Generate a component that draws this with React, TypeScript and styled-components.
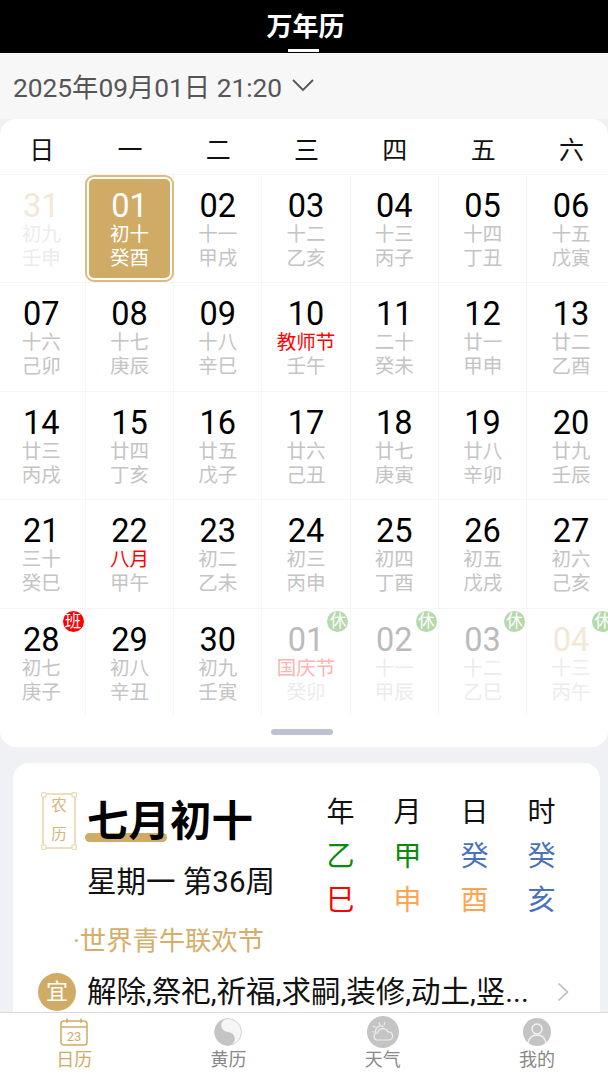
import React from "react";
import styled, { createGlobalStyle } from "styled-components";

const FONT = `Roboto, "Noto Sans CJK SC", sans-serif`;
const GOLD = "#d0ab66";

const GlobalStyle = createGlobalStyle`
  html, body {
    margin: 0;
    padding: 0;
    background: #eff1f5;
    font-family: ${FONT};
  }
`;

const Page = styled.div`
  width: 608px;
  height: 1074px;
  overflow: hidden;
  display: flex;
  flex-direction: column;
  background: #eff1f5;
`;
const Header = styled.div`
  height: 53px;
  flex: none;
  background: #000;
  display: flex;
  justify-content: center;
`;
const HeaderTitle = styled.div`
  height: 53px;
  box-sizing: border-box;
  padding: 7px 0 0 3px;
  color: #fff;
  font-size: 26px;
  line-height: 40px;
  font-weight: 700;
  position: relative;
  &::after {
    content: "";
    position: absolute;
    left: 25px;
    bottom: 1px;
    width: 31px;
    height: 3px;
    background: #fff;
  }
`;
const DateBar = styled.div`
  height: 66px;
  flex: none;
  background: #f7f7f7;
  display: flex;
  align-items: center;
  gap: 10px;
  padding: 0 0 2px 13px;
  box-sizing: border-box;
  color: #555;
  font-size: 26.3px;
`;
const Main = styled.div`
  flex: 1;
  min-height: 0;
  overflow: hidden;
`;
const CalendarCard = styled.div`
  height: 628px;
  background: #fff;
  border-radius: 16px;
  overflow: hidden;
  box-sizing: border-box;
`;
const Grid = styled.div`
  display: grid;
  grid-template-columns: repeat(7, 88.3px);
  margin-left: -2.5px;
  width: 618.1px;
`;
const WeekHead = styled.div`
  height: 55px;
  display: flex;
  align-items: center;
  justify-content: center;
  padding-top: 3px;
  box-sizing: border-box;
  font-size: 25px;
  color: #111;
`;
const Cell = styled.div`
  position: relative;
  height: 108.4px;
  box-sizing: border-box;
  border-top: 1px solid #f6f6f6;
  border-right: 1px solid #f6f6f6;
  display: flex;
  flex-direction: column;
  align-items: center;
  padding-top: 14px;
`;
const Selected = styled.div<{ $on: boolean }>`
  position: absolute;
  left: 1px;
  top: 2px;
  right: 1px;
  bottom: 2px;
  display: ${({ $on }) => ($on ? "block" : "none")};
  background: ${GOLD};
  border: 2px solid #fff;
  outline: 2px solid #dcbb7e;
  border-radius: 7px;
  box-sizing: border-box;
`;
const Num = styled.div<{ $color: string }>`
  position: relative;
  font-size: 32.5px;
  line-height: 34px;
  color: ${({ $color }) => $color};
`;
const Sub = styled.div<{ $color: string }>`
  position: relative;
  font-size: 19.5px;
  line-height: 24px;
  white-space: nowrap;
  color: ${({ $color }) => $color};
`;
const Badge = styled.div<{ $bg: string }>`
  position: absolute;
  top: 2px;
  left: 65px;
  width: 21px;
  height: 21px;
  border-radius: 50%;
  background: ${({ $bg }) => $bg};
  color: #fff;
  font-size: 16.5px;
  line-height: 21px;
  text-align: center;
`;
const Handle = styled.div`
  width: 62px;
  height: 6px;
  margin: 13px 0 0 271px;
  border-radius: 3px;
  background: #bcc3ce;
`;
const InfoCard = styled.div`
  margin: 16px 8px 0 13px;
  height: 300px;
  background: #fff;
  border-radius: 16px;
  padding: 29px 0 0 25px;
  box-sizing: border-box;
`;
const TopRow = styled.div`
  display: flex;
  align-items: flex-start;
`;
const LeftCol = styled.div`
  width: 273px;
  flex: none;
`;
const TitleRow = styled.div`
  display: flex;
  gap: 10px;
  margin-left: 3px;
`;
const Seal = styled.div`
  position: relative;
  width: 36px;
  height: 58px;
  flex: none;
  box-sizing: border-box;
  display: flex;
  flex-direction: column;
  align-items: center;
  justify-content: center;
  color: #d8b67a;
  font-size: 15.5px;
  line-height: 29px;
  svg {
    position: absolute;
    inset: 0;
  }
`;
const LunarTitle = styled.div`
  position: relative;
  font-size: 41.5px;
  line-height: 56px;
  font-weight: 700;
  color: #000;
  padding-top: 2px;
  &::before {
    content: "";
    position: absolute;
    left: -2px;
    top: 41px;
    width: 82px;
    height: 9px;
    border-radius: 5px;
    background: ${GOLD};
  }
`;
const TitleText = styled.span`
  position: relative;
`;
const WeekLine = styled.div`
  margin: 12px 0 0 49px;
  font-size: 29.5px;
  line-height: 40px;
  color: #111;
`;
const Festival = styled.div`
  margin: 19px 0 0 35px;
  font-size: 26.3px;
  line-height: 40px;
  color: #d4ae6a;
  white-space: nowrap;
`;
const Pillars = styled.div`
  display: grid;
  grid-template-columns: repeat(4, 67px);
  grid-auto-rows: 44px;
  margin: -4px 0 0 -4px;
`;
const Pillar = styled.div<{ $color: string }>`
  display: flex;
  align-items: center;
  justify-content: center;
  font-size: 28px;
  color: ${({ $color }) => $color};
`;
const YiRow = styled.div`
  display: flex;
  align-items: center;
  margin-top: 11px;
`;
const YiMark = styled.div`
  width: 38px;
  height: 38px;
  border-radius: 50%;
  background: ${GOLD};
  color: #fff;
  font-size: 22px;
  line-height: 38px;
  text-align: center;
  flex: none;
`;
const YiText = styled.div`
  margin-left: 11px;
  width: 440px;
  font-size: 29.5px;
  line-height: 40px;
  color: #111;
  white-space: nowrap;
`;
const Chevron = styled.div`
  margin-left: 30px;
  display: flex;
  color: #bbb;
`;
const TabBar = styled.div`
  flex: none;
  height: 62px;
  background: #fff;
  border-top: 1px solid #d9d9d9;
  box-sizing: border-box;
  display: grid;
  grid-template-columns: repeat(4, 154.3px);
  margin-left: -3px;
  width: 617.2px;
`;
const Tab = styled.div<{ $active?: boolean }>`
  display: flex;
  flex-direction: column;
  align-items: center;
  padding-top: 3px;
  color: ${({ $active }) => ($active ? GOLD : "#888")};
  font-size: 18px;
  line-height: 24px;
`;
const TabIcon = styled.div`
  height: 32px;
  display: flex;
  align-items: center;
  justify-content: center;
`;

type Day = {
  n: string;
  l: string;
  g: string;
  kind?: "dimGold" | "dimGrey" | "sel";
  lc?: string;
  badge?: string;
};

const days: Day[] = [
  { n: "31", l: "初九", g: "壬申", kind: "dimGold" },
  { n: "01", l: "初十", g: "癸酉", kind: "sel" },
  { n: "02", l: "十一", g: "甲戌" },
  { n: "03", l: "十二", g: "乙亥" },
  { n: "04", l: "十三", g: "丙子" },
  { n: "05", l: "十四", g: "丁丑" },
  { n: "06", l: "十五", g: "戊寅" },
  { n: "07", l: "十六", g: "己卯" },
  { n: "08", l: "十七", g: "庚辰" },
  { n: "09", l: "十八", g: "辛巳" },
  { n: "10", l: "教师节", g: "壬午", lc: "#f00" },
  { n: "11", l: "二十", g: "癸未" },
  { n: "12", l: "廿一", g: "甲申" },
  { n: "13", l: "廿二", g: "乙酉" },
  { n: "14", l: "廿三", g: "丙戌" },
  { n: "15", l: "廿四", g: "丁亥" },
  { n: "16", l: "廿五", g: "戊子" },
  { n: "17", l: "廿六", g: "己丑" },
  { n: "18", l: "廿七", g: "庚寅" },
  { n: "19", l: "廿八", g: "辛卯" },
  { n: "20", l: "廿九", g: "壬辰" },
  { n: "21", l: "三十", g: "癸巳" },
  { n: "22", l: "八月", g: "甲午", lc: "#f00" },
  { n: "23", l: "初二", g: "乙未" },
  { n: "24", l: "初三", g: "丙申" },
  { n: "25", l: "初四", g: "丁酉" },
  { n: "26", l: "初五", g: "戊戌" },
  { n: "27", l: "初六", g: "己亥" },
  { n: "28", l: "初七", g: "庚子", badge: "班" },
  { n: "29", l: "初八", g: "辛丑" },
  { n: "30", l: "初九", g: "壬寅" },
  { n: "01", l: "国庆节", g: "癸卯", kind: "dimGrey", lc: "#ffb3b3", badge: "休" },
  { n: "02", l: "十一", g: "甲辰", kind: "dimGrey", badge: "休" },
  { n: "03", l: "十二", g: "乙巳", kind: "dimGrey", badge: "休" },
  { n: "04", l: "十三", g: "丙午", kind: "dimGold", badge: "休" },
];

const pillars = [
  ["年", "#111"], ["月", "#111"], ["日", "#111"], ["时", "#111"],
  ["乙", "#0a8a0a"], ["甲", "#0a8a0a"], ["癸", "#4a72b8"], ["癸", "#4a72b8"],
  ["巳", "#f00"], ["申", "#ffa552"], ["酉", "#ffa552"], ["亥", "#4a72b8"],
];

function numColor(d: Day) {
  if (d.kind === "sel") return "#fff";
  if (d.kind === "dimGold") return "#f2e8d6";
  if (d.kind === "dimGrey") return "#bbb";
  return "#000";
}

function subColor(d: Day) {
  if (d.kind === "sel") return "#fff";
  if (d.kind) return "#ececec";
  return "#c4c4c4";
}

function SealFrame() {
  const c = "#e8d3aa";
  return (
    <svg width="36" height="58" viewBox="0 0 36 58" fill="none" stroke={c} strokeWidth="1.5">
      <path d="M5 2H31M5 56H31M2 5V53M34 5V53" />
      <path d="M0.700 0.700H5V5H0.700zM31 0.700H35.300V5H31zM0.700 53H5V57.300H0.700zM31 53H35.300V57.300H31z" strokeWidth="1" />
    </svg>
  );
}

function CalendarIcon() {
  return (
    <svg width="28" height="28" viewBox="0 0 28 28" fill="none" stroke={GOLD} strokeWidth="1.5">
      <rect x="1" y="3" width="26" height="24" rx="3" />
      <path d="M1 9H27M7 0.5V5M21 0.5V5" />
      <text x="14" y="23" textAnchor="middle" fontSize="13" fill={GOLD} stroke="none" fontFamily="Roboto, sans-serif">23</text>
    </svg>
  );
}

function YinYangIcon() {
  return (
    <svg width="28" height="28" viewBox="0 0 28 28">
      <circle cx="14" cy="14" r="13.4" fill="#f6f6f6" stroke="#d4d4d4" strokeWidth="1" />
      <path d="M14 .5a13.500 13.500 0 0 0 0 27 6.750 6.750 0 0 0 0-13.500 6.750 6.750 0 0 1 0-13.500z" fill="#c4c4c4" />
      <circle cx="14" cy="7.200" r="2" fill="#f6f6f6" />
      <circle cx="14" cy="20.800" r="2" fill="#c4c4c4" />
    </svg>
  );
}

function WeatherIcon() {
  return (
    <svg width="32" height="32" viewBox="0 0 32 32" fill="none" stroke="#eee" strokeWidth="1.2">
      <circle cx="16" cy="16" r="16" fill="#c4c4c4" stroke="none" />
      <path d="M9 17a5 5 0 0 1 7.500-6M12 6.500l1 2.500M6 10l2.500 1.500M5 16h2.500M18 6.500l-1 2.500" />
      <path d="M10.500 24a3.500 3.500 0 0 1 0-7 5.500 5.500 0 0 1 10.500-1 4 4 0 0 1 1 8z" />
    </svg>
  );
}

function UserIcon() {
  return (
    <svg width="28" height="28" viewBox="0 0 28 28" fill="none" stroke="#f2f2f2" strokeWidth="1.4">
      <circle cx="14" cy="14" r="14" fill="#c4c4c4" stroke="none" />
      <circle cx="14" cy="11" r="5" />
      <path d="M5 25c1-5 4.500-8 9-8s8 3 9 8" />
    </svg>
  );
}

export default function App() {
  return (
    <Page>
      <GlobalStyle />
      <Header>
        <HeaderTitle>万年历</HeaderTitle>
      </Header>
      <DateBar>
        <span>2025年09月01日 21:20</span>
        <svg width="22" height="14" viewBox="0 0 22 14" fill="none" stroke="#555" strokeWidth="1.8">
          <path d="M1 2l10 10L21 2" />
        </svg>
      </DateBar>
      <Main>
        <CalendarCard>
          <Grid>
            {["日", "一", "二", "三", "四", "五", "六"].map((w) => (
              <WeekHead key={w}>{w}</WeekHead>
            ))}
            {days.map((d, i) => (
              <Cell key={i}>
                <Selected $on={d.kind === "sel"} />
                <Num $color={numColor(d)}>{d.n}</Num>
                <Sub $color={d.lc || subColor(d)}>{d.l}</Sub>
                <Sub $color={subColor(d)}>{d.g}</Sub>
                {d.badge && <Badge $bg={d.badge === "班" ? "#f00" : "#b5d9ab"}>{d.badge}</Badge>}
              </Cell>
            ))}
          </Grid>
          <Handle />
        </CalendarCard>
        <InfoCard>
          <TopRow>
            <LeftCol>
              <TitleRow>
                <Seal>
                  <SealFrame />
                  <span>农</span>
                  <span>历</span>
                </Seal>
                <LunarTitle>
                  <TitleText>七月初十</TitleText>
                </LunarTitle>
              </TitleRow>
              <WeekLine>星期一 第36周</WeekLine>
              <Festival>·世界青牛联欢节</Festival>
            </LeftCol>
            <Pillars>
              {pillars.map(([t, c], i) => (
                <Pillar key={i} $color={c}>{t}</Pillar>
              ))}
            </Pillars>
          </TopRow>
          <YiRow>
            <YiMark>宜</YiMark>
            <YiText>解除,祭祀,祈福,求嗣,装修,动土,竖...</YiText>
            <Chevron>
              <svg width="12" height="20" viewBox="0 0 12 20" fill="none" stroke="currentColor" strokeWidth="1.6">
                <path d="M1.500 1.500L10.500 10l-9 8.500" />
              </svg>
            </Chevron>
          </YiRow>
        </InfoCard>
      </Main>
      <TabBar>
        <Tab $active>
          <TabIcon><CalendarIcon /></TabIcon>
          日历
        </Tab>
        <Tab>
          <TabIcon><YinYangIcon /></TabIcon>
          黄历
        </Tab>
        <Tab>
          <TabIcon><WeatherIcon /></TabIcon>
          天气
        </Tab>
        <Tab>
          <TabIcon><UserIcon /></TabIcon>
          我的
        </Tab>
      </TabBar>
    </Page>
  );
}
